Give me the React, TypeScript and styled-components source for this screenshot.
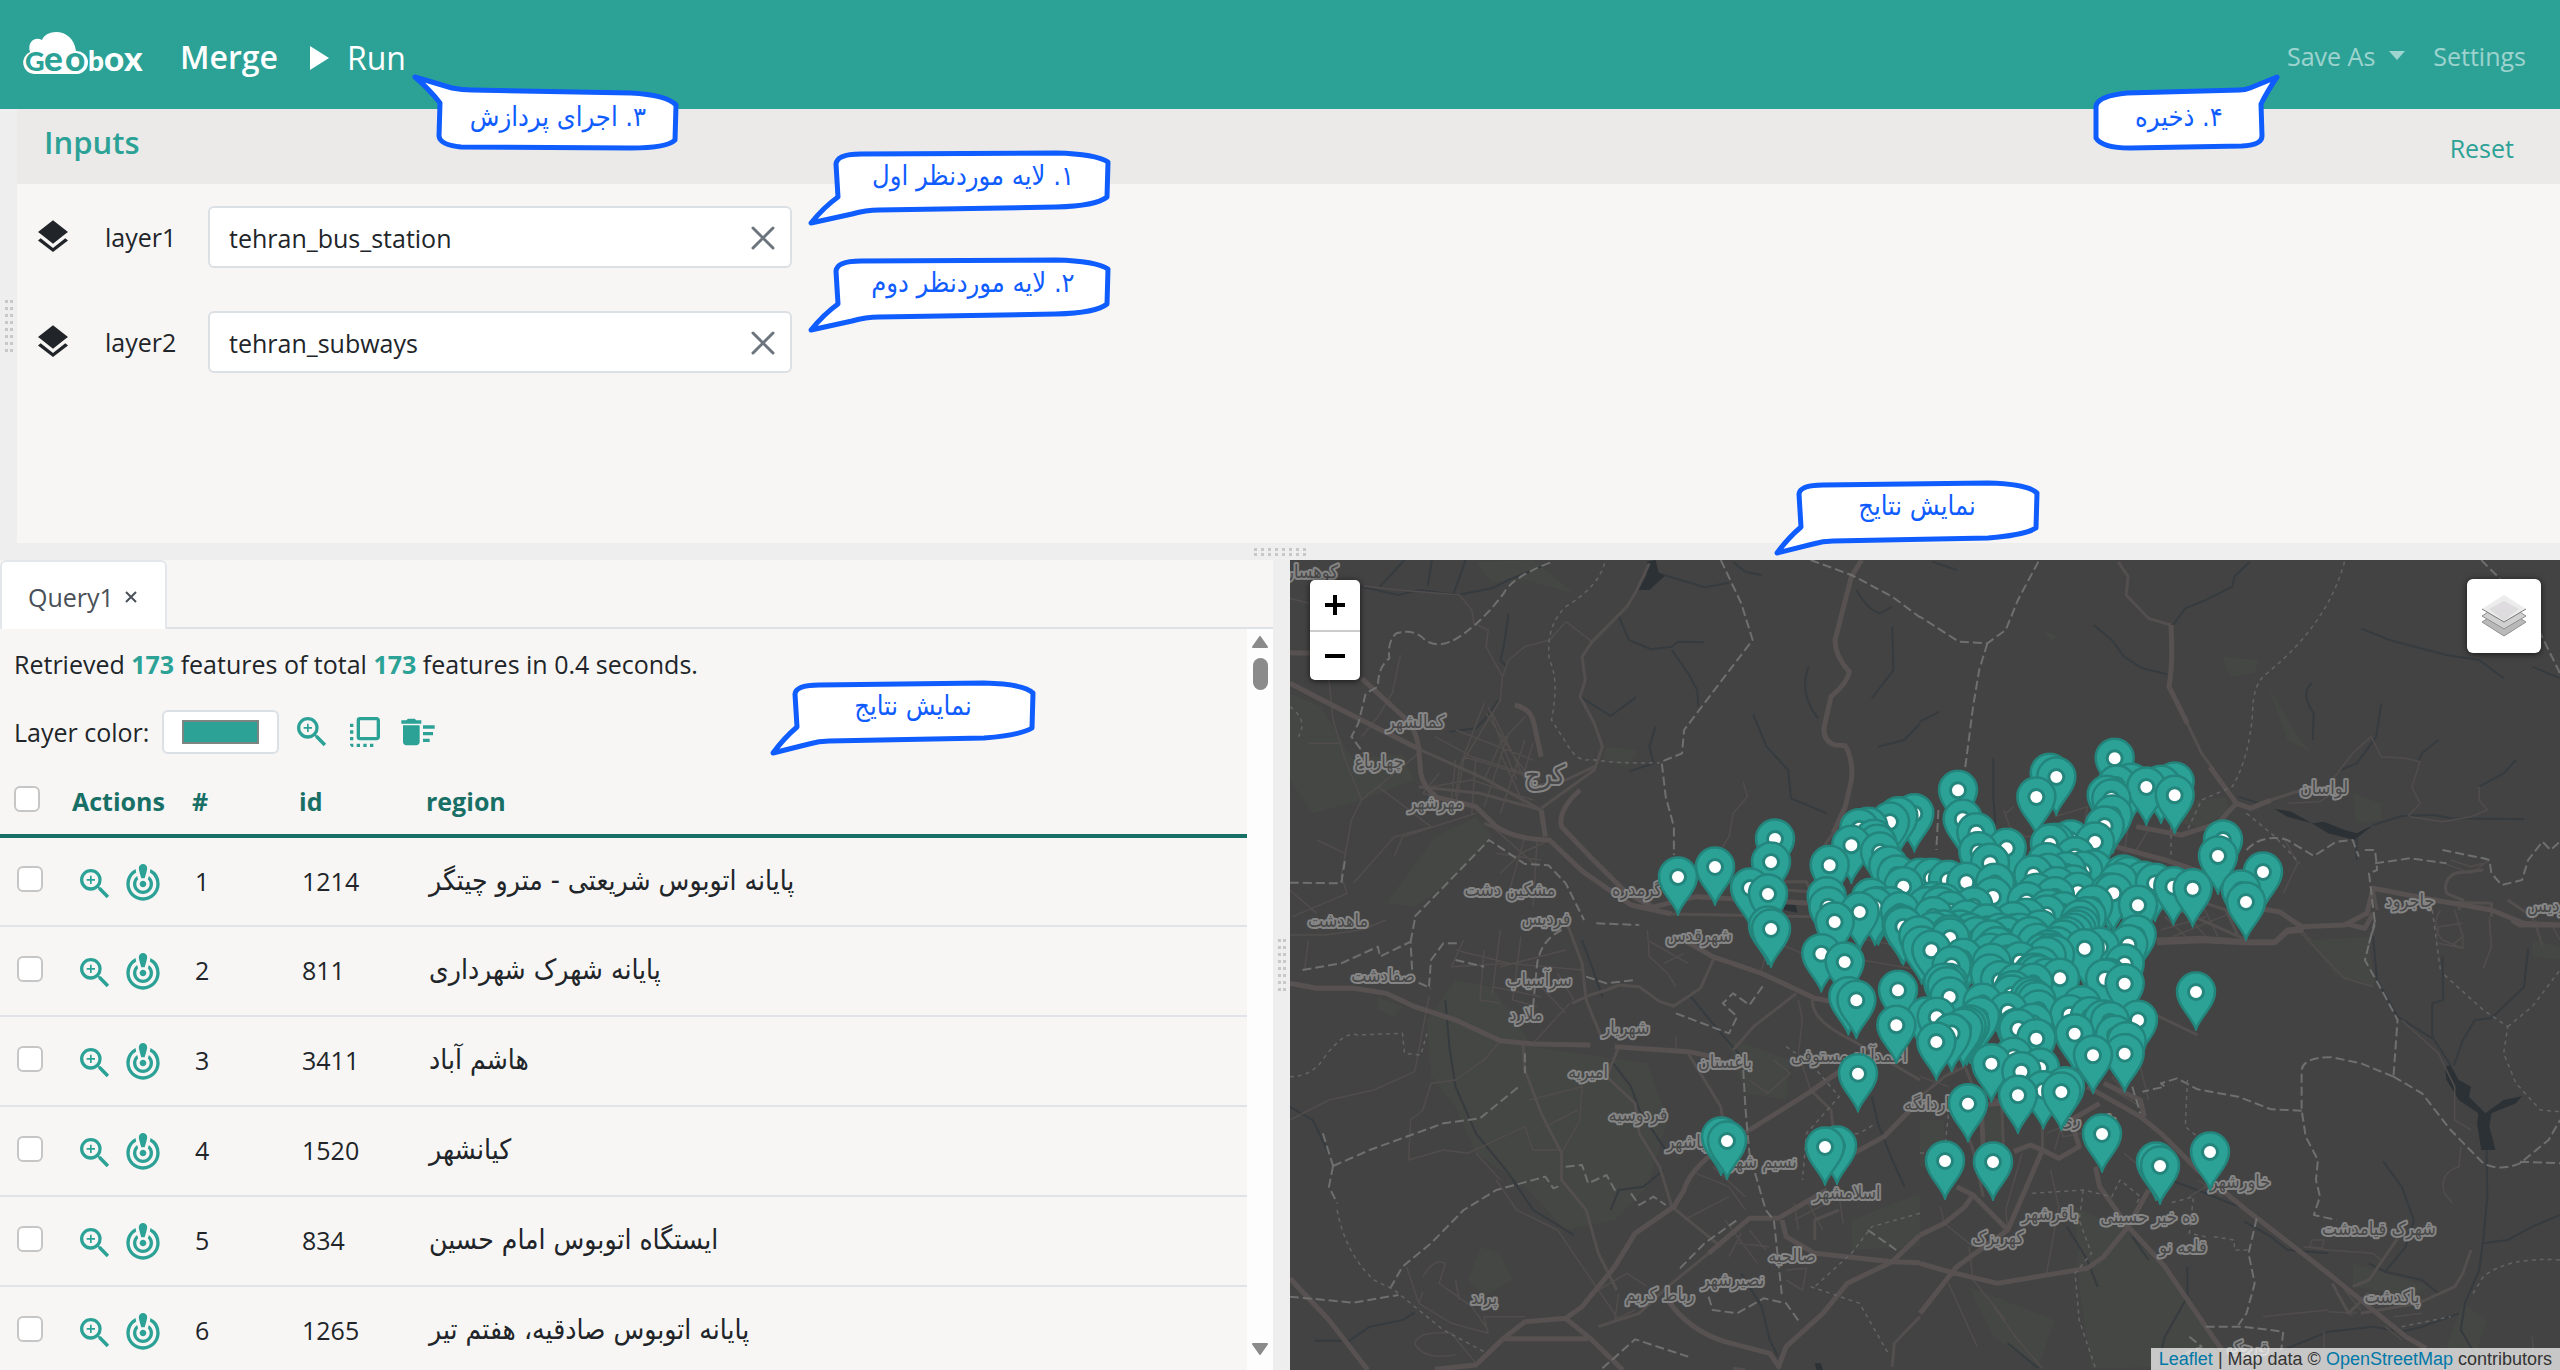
import React from "react";
import styled, { createGlobalStyle } from "styled-components";
import { MdZoomIn, MdFlipToFront, MdDeleteSweep, MdCrisisAlert, MdLayers } from "react-icons/md";

const teal = "#2ca297";
const deepTeal = "#176f65";
const blue = "#0f5cff";
const sans = `"Open Sans", "DejaVu Sans Condensed", "DejaVu Sans", sans-serif`;
const persian = `"DejaVu Sans Condensed", "DejaVu Sans", sans-serif`;

const Global = createGlobalStyle`
  *, *::before, *::after { box-sizing: border-box; }
  body { margin: 0; font: 25px/36px ${sans}; color: #212529; background: #eeeeee; }
  button, input { font: inherit; color: inherit; }
  button { border: 0; padding: 0; background: none; cursor: pointer; }
`;

const Page = styled.div`
  position: relative;
  display: flex;
  flex-direction: column;
  height: 100vh;
  overflow: hidden;
`;

const Header = styled.header`
  display: flex;
  align-items: center;
  flex: 0 0 109px;
  padding: 6px 34px 0 22px;
  background: ${teal};
  color: #fff;
`;
const Logo = styled.svg`
  width: 124px;
  height: 44px;
  margin: 0 34px 7px 0;
`;
const Title = styled.h1`
  margin: 0 32px 2px 0;
  font-size: 32px;
  line-height: 48px;
  font-weight: 600;
`;
const RunButton = styled.button`
  display: flex;
  align-items: center;
  gap: 18px;
  font-size: 32px;
  line-height: 48px;
`;
const HeaderNav = styled.nav`
  display: flex;
  align-items: center;
  gap: 28px;
  margin: 0 0 4px auto;
  color: rgba(255, 255, 255, 0.55);
`;
const NavButton = styled.button`
  display: flex;
  align-items: center;
  gap: 14px;
  color: inherit;
`;

const Upper = styled.div`
  display: flex;
  flex: 0 0 434px;
`;
const SideGutter = styled.div`
  display: flex;
  align-items: center;
  justify-content: center;
  width: 17px;
`;
const InputsPanel = styled.section`
  flex: 1;
  background: #f7f6f4;
`;
const PanelHead = styled.div`
  display: flex;
  justify-content: space-between;
  align-items: center;
  height: 75px;
  padding: 2px 46px 0 27px;
  background: #ebeae8;
  color: ${teal};
`;
const PanelTitle = styled.h2`
  margin: 0;
  padding-bottom: 12px;
  font-size: 31px;
  line-height: 42px;
  font-weight: 600;
`;
const Fields = styled.div`
  display: flex;
  flex-direction: column;
  gap: 43px;
  padding: 22px 16px;
`;
const Field = styled.div`
  display: grid;
  grid-template-columns: 72px 103px 584px;
  align-items: center;
`;
const InputBox = styled.div`
  display: flex;
  align-items: center;
  height: 62px;
  padding: 2px 14px 0 19px;
  border: 2px solid #dbe0e5;
  border-radius: 6px;
  background: #fff;
`;
const TextInput = styled.input`
  flex: 1;
  min-width: 0;
  border: 0;
  padding: 0;
  outline: 0;
  background: none;
`;
const IconButton = styled.button`
  display: inline-flex;
  color: ${teal};
`;

const RowGutter = styled.div`
  display: flex;
  align-items: center;
  justify-content: center;
  flex: 0 0 17px;
`;
const Lower = styled.div`
  display: grid;
  grid-template-columns: minmax(0, 1273fr) 17px minmax(0, 1270fr);
  flex: 1;
  min-height: 0;
`;
const Results = styled.section`
  display: flex;
  flex-direction: column;
  min-height: 0;
  background: #f7f6f4;
`;
const Tabs = styled.div`
  display: flex;
  height: 69px;
  border-bottom: 2px solid #dee2e6;
`;
const Tab = styled.div`
  display: flex;
  align-items: center;
  gap: 11px;
  height: 69px;
  padding: 2px 28px 0 26px;
  border: 2px solid #e3e6ea;
  border-bottom: 0;
  border-radius: 6px 6px 0 0;
  background: #fff;
  color: #495057;
`;
const ResultBody = styled.div`
  display: flex;
  flex: 1;
  min-height: 0;
`;
const ResultContent = styled.div`
  flex: 1;
  overflow: hidden;
`;
const Summary = styled.p`
  margin: 0;
  padding: 17px 14px 0;
  b { color: ${teal}; }
`;
const LayerBar = styled.div`
  display: flex;
  align-items: center;
  gap: 13px;
  padding: 28px 14px 0;
`;
const ColorInput = styled.input`
  width: 117px;
  height: 44px;
  padding: 8px 18px;
  border: 2px solid #dbe0e5;
  border-radius: 6px;
  background: #fff;
  &::-webkit-color-swatch-wrapper { padding: 0; }
  &::-webkit-color-swatch { border: 2px solid #7d8583; border-radius: 0; }
`;
const Table = styled.table`
  width: 100%;
  margin-top: 16px;
  border-collapse: collapse;
  table-layout: fixed;
  text-align: left;
`;
const HeadCell = styled.th<{ $w?: number }>`
  width: ${(p) => (p.$w ? p.$w + "px" : "auto")};
  height: 66px;
  padding: 0 0 3px 14px;
  border-bottom: 4px solid ${deepTeal};
  color: ${deepTeal};
  font-weight: 700;
`;
const Cell = styled.td`
  height: 90px;
  padding: 0 0 2px 17px;
  border-bottom: 2px solid #e0e3e8;
`;
const RegionCell = styled(Cell)`
  font-family: ${persian};
  font-size: 28px;
`;
const Check = styled.input`
  display: block;
  appearance: none;
  width: 26px;
  height: 26px;
  margin: 0 0 3px;
  border: 2px solid #c6c6c6;
  border-radius: 6px;
  background: #fff;
`;
const Actions = styled.div`
  display: flex;
  gap: 8px;
  padding-top: 6px;
`;
const Scroll = styled.div`
  display: flex;
  flex-direction: column;
  align-items: center;
  width: 26px;
  padding: 7px 0 15px;
  background: #fdfdfd;
`;
const Thumb = styled.div`
  flex: 0 0 32px;
  width: 15px;
  margin: 10px 0 auto;
  border-radius: 8px;
  background: #8b8b8b;
`;

const MapPane = styled.section`
  position: relative;
  overflow: hidden;
  background: #434343;
`;
const MapCanvas = styled.svg`
  display: block;
  width: 100%;
  height: 100%;
`;
const ZoomControl = styled.div`
  position: absolute;
  top: 20px;
  left: 20px;
  border-radius: 5px;
  background: #fff;
  box-shadow: 0 1px 6px rgba(0, 0, 0, 0.65);
`;
const ZoomButton = styled.button`
  display: flex;
  align-items: center;
  justify-content: center;
  width: 50px;
  height: 50px;
  color: #000;
  & + & { border-top: 2px solid #ccc; }
`;
const LayersControl = styled.button`
  position: absolute;
  top: 19px;
  right: 19px;
  display: flex;
  align-items: center;
  justify-content: center;
  width: 74px;
  height: 74px;
  border-radius: 6px;
  background: #fff;
  box-shadow: 0 1px 6px rgba(0, 0, 0, 0.65);
`;
const Attribution = styled.div`
  position: absolute;
  right: 0;
  bottom: 0;
  padding: 0 8px;
  background: rgba(255, 255, 255, 0.7);
  color: #333;
  font: 18px/22px "Liberation Sans", Arial, sans-serif;
  a { color: #0078a8; text-decoration: none; }
`;

const Callout = styled.div<{ $top: number; $left?: string; $right?: string }>`
  position: absolute;
  top: ${(p) => p.$top}px;
  left: ${(p) => p.$left ?? "auto"};
  right: ${(p) => p.$right ?? "auto"};
  display: grid;
  align-items: start;
  justify-items: center;
  color: ${blue};
  font-family: ${persian};
  font-size: 27px;
  > * { grid-area: 1 / 1; }
`;
const CalloutText = styled.span<{ $pad: string }>`
  padding: ${(p) => p.$pad};
  white-space: nowrap;
`;

const bubbles = {
  wide: { w: 306, h: 78, pad: "8px 0 0 28px", d: "M5 73Q18 57 32 47L30 14Q31 4 55 4L250 3Q290 4 302 12L301 47Q290 56 250 57L73 60Q60 60 46 64Z" },
  short: { w: 268, h: 78, pad: "8px 0 0 20px", d: "M4 73Q15 58 28 47L26 14Q27 5 50 5L215 3Q255 4 264 13L263 48Q252 55 215 58L60 61Q50 61 40 64Z" },
  run: { w: 268, h: 80, pad: "27px 0 0 24px", d: "M3 5L40 16Q50 18 60 18L219 21Q255 23 264 33L263 68Q255 76 219 76L49 75Q28 73 27 64L28 31Q18 18 3 5Z" },
  save: { w: 190, h: 80, pad: "27px 12px 0 0", d: "M187 5L160 16Q155 18 150 18L37 21Q8 24 6 34L6 66Q12 76 40 76L152 74Q172 73 172 64L171 32Q177 20 187 5Z" },
};

function Bubble({ kind, top, left, right, children }: { kind: keyof typeof bubbles; top: number; left?: string; right?: string; children: React.ReactNode }) {
  const b = bubbles[kind];
  return (
    <Callout $top={top} $left={left} $right={right} dir="ltr">
      <svg width={b.w} height={b.h} viewBox={`0 0 ${b.w} ${b.h}`} overflow="visible" aria-hidden="true">
        <path d={b.d} fill="#fff" stroke={blue} strokeWidth="5" strokeLinejoin="round" />
      </svg>
      <CalloutText dir="rtl" $pad={b.pad}>{children}</CalloutText>
    </Callout>
  );
}

function Grip({ cols, rows }: { cols: number; rows: number }) {
  const dots = [];
  for (let r = 0; r < rows; r++)
    for (let c = 0; c < cols; c++)
      dots.push(<rect key={`${r}-${c}`} x={c * (rows > cols ? 5 : 7)} y={r * (rows > cols ? 7 : 5)} width="3" height="3" fill="#c8c8c8" />);
  return <svg width={rows > cols ? 8 : 52} height={rows > cols ? 52 : 8} aria-hidden="true">{dots}</svg>;
}

const rows: [number, number, string][] = [
  [1, 1214, "پایانه اتوبوس شریعتی - مترو چیتگر"],
  [2, 811, "پایانه شهرک شهرداری"],
  [3, 3411, "هاشم آباد"],
  [4, 1520, "کیانشهر"],
  [5, 834, "ایستگاه اتوبوس امام حسین"],
  [6, 1265, "پایانه اتوبوس صادقیه، هفتم تیر"],
];

/* City centre stations, in thirds of a map pixel from (1800, 720). */
const cityStations = `474,211 769,171 749,160 709,231 944,115 1039,201 1124,226 1124,186 1083,196 950,195 993,190 920,226 934,237 938,285 914,318 885,366
343,281 295,290 270,306 205,322 178,326 154,376 89,436 222,358 232,373 240,396 265,438 290,465 488,298 529,338 535,395 570,430 620,385 310,500
360,475 395,475 444,481 499,487 585,490 579,531 80,530 85,560 104,606 213,535 235,560 225,562 179,576 64,701 134,726 145,830 169,841 294,811 289,916
379,891 410,892 409,966 455,940 500,920 510,915 490,925 540,890 174,1061 504,1151 574,1031 640,1012 664,1055 720,1044 654,1126 730,1112 784,1116 795,1100
879,1006 974,1001 824,941 809,884 1014,901 709,956 655,927 624,875 974,791 915,777 925,775 974,732 985,674 1010,645 854,686 900,682 1014,556
1178,506 1120,500 1065,490 1030,484 880,555 928,519 850,454 834,517 745,568 449,831 394,691 450,654 305,615 765,370 812,360 750,372 740,428 825,410
700,465 745,460 800,455 880,450 970,465 985,470 955,488 940,520 680,545 710,520 770,500 820,495 765,530 400,545 430,550 400,590 450,574 300,575
270,560 310,620 355,648 365,678 490,715 455,738 445,790 440,800 430,790 548,850 575,730 570,762 600,782 570,700 570,660 620,650 660,640 640,605 680,595
720,630 740,585 790,575 840,600 830,630 800,650 770,680 740,710 720,740 700,760 650,790 700,790 740,775 780,775 635,825 640,812 690,830 700,838 710,845 715,870
845,857 870,890 910,900 930,905 945,946 980,965 650,925 700,910 380,560 420,560 510,640 560,612 450,645 400,635 620,700 660,725 530,650 590,680
730,700 745,690 755,700 765,705 715,765 705,760 600,640 500,600 480,630 430,630 840,620 820,640 790,660 860,590 520,560 690,650 710,670`;
const outerStations = `1678,877 1715,867 1775,839 1771,862 1750,888 1768,894 1768,926 1771,929 1721,1137 1727,1141 1837,1146 1825,1147 2196,992 1945,1161 1993,1162 2102,1134 2156,1162 2160,1166 2210,1152 2223,840 2218,856 2263,872 2241,890 2246,902`;
const parse = (s: string) => s.trim().split(/\s+/).map((p) => p.split(",").map(Number));
const stations = [
  ...parse(cityStations).map(([x, y]) => [1800 + x / 3, 720 + y / 3]),
  ...parse(outerStations),
].sort((a, b) => a[1] - b[1]);

const places: [number, number, string, number?][] = [
  [1312, 578, "کوهسار"], [1416, 728, "کمالشهر"], [1379, 768, "چهارباغ"], [1545, 784, "کرج", 27], [1436, 809, "مهرشهر"],
  [1510, 896, "مشکین دشت"], [1637, 896, "گرمدره"], [1338, 927, "ماهدشت"], [1546, 925, "فردیس"], [1699, 942, "شهرقدس"],
  [1383, 982, "صفادشت"], [1539, 986, "سرآسیاب"], [1526, 1021, "ملارد"], [1626, 1034, "شهریار"], [1725, 1068, "باغستان"],
  [1849, 1062, "احمدآباد مستوفی"], [1588, 1078, "امیریه"], [1638, 1121, "فردوسیه"], [1690, 1148, "رباشهر"], [1762, 1168, "نسیم شهر"],
  [1847, 1199, "اسلامشهر"], [1792, 1262, "صالحیه"], [1733, 1286, "نصیرشهر"], [1660, 1301, "رباط کریم"], [1484, 1304, "پرند"],
  [1936, 1110, "چهاردانگه"], [2088, 1126, "شهر ری"], [2050, 1220, "باقرشهر"], [1998, 1244, "کهریزک"], [2149, 1223, "ده خیر حسینی"],
  [2183, 1253, "قلعه نو"], [2240, 1188, "خاورشهر"], [2379, 1235, "شهرک قیامدشت"], [2392, 1303, "پاکدشت"], [2248, 1354, "قرچک"],
  [2324, 794, "لواسان"], [2410, 907, "جاجرود"], [2550, 912, "پردیس"],
];

type Tile = { at: [number, number]; green: string; water: string; river: string; border: string; dots: string; big: string; mid: string; small: string };
const tiles: Tile[] = [
  {
    at: [1280, 460],
    green: "M480 305L620 300L720 400L600 360L520 370ZM24 700L100 740L180 900L300 880L330 960L200 1020L80 1060L24 960ZM800 860L880 870L850 920L790 900ZM380 1130L480 1070L520 1130L400 1280L330 1340L260 1330Z",
    water: "M900 305L920 300L928 338L945 345L905 390L878 390L898 345ZM1235 1320L1262 1325L1268 1358L1235 1350Z",
    river: "M200 380L290 405L340 390L435 405L520 385L560 360L660 310M305 300L245 380M372 300L362 378M455 300L425 402M830 470L855 540L910 568L960 560L975 545L1040 547M960 570L1000 640L1022 690L1025 740M735 710L810 768L872 712M1160 765L1192 860L1245 930L1252 1015L1340 1060M940 345L1040 382L1100 368M1295 620Q1270 700 1318 775M1500 500L1503 630L1450 715M560 460L548 560L540 600L555 620M535 720L500 780L480 805L415 815M920 800L905 860L915 910L855 935M1412 390Q1440 450 1470 460L1500 440M1465 860L1530 840L1568 790M1110 305L1140 335L1180 345",
    border: "M662 308Q570 350 548 400Q500 480 440 530Q390 570 355 540Q330 505 285 520Q262 545 268 595Q240 620 240 680L210 700L192 790L175 830L205 880M1080 300L1130 430L1158 540L1080 665L990 810L985 880L935 905L945 1010L965 1100L965 1185M1300 300L1400 345L1500 410L1568 472M24 1268L150 1270L160 1195M330 1370L400 1282L512 1140L600 1212L658 1216L700 1270L745 1380",
    dots: "M795 310Q780 380 700 440Q650 500 660 600Q685 660 665 780L702 850Q730 910 760 898Q830 912 930 908M24 740Q70 780 45 830",
    big: "M24 670L180 768L345 870M200 655L295 762Q335 800 340 870L345 940Q350 980 385 1012L480 1040L530 1100Q575 1138 660 1140L742 1235L860 1335L960 1362M622 790L640 890M575 735Q615 745 622 790M640 1050L650 1130M24 578L80 580M735 990Q680 1050 690 1100L760 1190L850 1300L920 1345M1425 300L1400 350L1360 540Q1360 590 1395 635Q1390 670 1350 710L1335 790Q1325 840 1360 855L1385 857Q1405 900 1400 960L1385 1040L1355 1120M900 1345L1020 1310L1300 1330",
    mid: "M345 870L500 955L640 1050M905 310L870 400L850 440L765 545L740 590L748 660L735 710L770 790L790 860L770 930L640 1045M340 980L490 1000L640 1050M770 920L700 960L620 980M1100 1265L1290 1265L1300 1295L1180 1285M960 1362L1300 1370M500 1090L580 1130M1355 1120L1320 1180",
    small: "M205 378L290 390L440 405L470 450L475 490L510 510L505 560L545 650L540 720L520 760M700 485L660 540L600 560L560 600L545 650M700 485L765 545M295 585L275 700L240 770L200 830M120 660L130 780L160 900L200 1020L175 1080L150 1250L165 1300L30 1370M200 1020L290 930L340 880M200 1020L240 980L370 1100L280 1130L180 1270M24 1290L90 1360M500 730L440 920L430 1010M520 760L450 900L430 1040M560 820L500 1040M600 840L540 1060M505 760L580 900L640 1000M430 810L620 900M380 830L470 890L600 940M370 980L470 960L620 1020M430 900L420 1020M480 890L470 1060M540 880L600 1040M520 760L570 880L600 960M600 770L540 850L500 960M620 850L600 930M510 740L540 840L580 960M450 890L640 960M390 940L350 1000L430 1030M520 1100L630 1220M600 1130L560 1300M630 1140L620 1340M530 1180L640 1200M660 1140L590 1180L540 1240M480 1060L300 1130L280 1190M90 1140L160 1180M70 850L150 850M1135 965L1145 1010L1110 1060L1100 1130L1080 1170M24 415L70 430",
  },
  {
    at: [1920, 540],
    green: "M740 350L830 360L820 400L760 410ZM850 430L920 580L960 640L900 600ZM300 270L340 290L320 300ZM670 780L750 770L760 820L680 860L640 850ZM1060 760L1130 790L1130 840L1070 850ZM960 1200L1100 1190L1100 1290L1000 1280Z",
    water: "M868 806L910 815L960 850L990 845L1040 870L1070 880L1110 855L1065 900L1000 880L960 850L900 830Z",
    river: "M808 65L770 110L765 140L700 180L650 205L620 255M425 255L470 300L500 350L545 385L605 403M1080 265L1150 300L1290 345L1370 360L1430 415M1130 490L1118 590L1070 670L1030 690M960 430Q930 460 965 520L962 600M1270 600L1230 640L1220 665M1110 855L1180 828L1260 825L1300 835L1480 838M180 655L180 780L185 850M1460 660L1430 700L1370 740M1070 890L1070 960M780 770L830 790M1500 380L1568 415M30 65L90 90M0 545L48 515",
    border: "M290 65L240 180L210 270L165 310L95 305L0 230M165 310L145 390L130 500L110 690M1375 60L1420 115L1500 230L1568 400M800 930Q840 880 900 900L965 948L1020 905L1060 900L1075 950M1115 970L1200 955L1290 970M1280 930L1380 955L1395 960L1400 1000L1425 1035L1475 1020L1490 960L1525 905L1545 930L1568 905M1090 930L1115 930L1120 990L1100 1000L1115 1150L1090 1250M45 810L40 930",
    dots: "M1040 65Q1000 250 850 400Q815 430 815 520Q805 660 765 740L690 780L655 870M615 860L615 950M800 820L870 890L930 970M1255 1110L1275 1290",
    big: "M615 255Q620 380 610 440L655 550M710 680L775 790L810 805L860 780M775 790L730 850L640 885L530 860M480 920L600 960L700 1000L800 1100L880 1115L935 1160L1040 1155L1095 1120L1110 1045L1260 1080L1400 1110L1480 1150L1568 1155M580 1200L690 1195L800 1205L870 1205L900 1170L940 1165M1110 1120L1090 1165L1040 1150",
    mid: "M485 65L510 110L505 165L560 235L615 255M655 550L690 640L720 690M860 780L935 750M1110 1045L1120 1110M1260 1085L1400 1090L1400 1130M700 1090L750 1110L780 1190M560 1070L800 1200M1380 990L1310 1000Q1280 1020 1290 1060L1330 1080L1320 1110M1440 1080L1500 1130",
    small: "M1010 720L1060 640L1105 590L1130 650L1190 655L1225 665L1205 740L1225 790L1195 830M1370 740L1370 780L1390 810L1350 830L1280 845L1200 830M900 790L980 785L1010 760M205 810L220 860L260 890L400 880L410 800L330 830M230 800L210 820M600 1130L660 1200M640 1100L700 1190M690 1090L730 1190M590 1170L700 1130M620 1190L760 1120M510 860L500 940M560 870L530 930M890 890L925 970L890 1060M930 1165L1020 1285M1275 1110Q1250 1160 1280 1200L1330 1225M1310 1110L1330 1190L1300 1220M1395 1130L1400 1220L1380 1285M1500 1130L1525 1220M1550 1160L1568 1200M1285 970L1350 1000L1395 960M1300 960L1350 980L1380 970",
  },
  {
    at: [1280, 920],
    green: "M360 300L430 180L520 200L620 380L900 430L950 600L900 800L820 900L700 930L600 800L480 700L430 560L370 470ZM490 980L540 1000L570 1080L500 1130L460 1080ZM1090 350L1250 420L1240 540L1140 520ZM1400 900L1568 820L1568 980L1400 990ZM240 230L300 260L280 290L240 270Z",
    water: "M1310 1330L1325 1330L1330 1350L1315 1350Z",
    river: "M405 240L415 380L430 500L480 640L560 760L620 870L720 945M810 420L860 500L880 570L950 700M1000 220L1060 310L1130 410M740 60L770 160L790 230M85 1262L170 1262L220 1220L300 1200L330 1178M1130 1060L1180 1160L1200 1260L1220 1310M1450 530L1465 610L1500 720L1530 800M940 750L890 800L830 810L810 870M24 560L80 600L120 700",
    border: "M55 150L150 130L240 80L245 110L320 65L325 180L370 205M330 0L320 65M365 200L370 120L400 70L440 70M430 120L500 140M690 30Q640 60 630 130L620 260M130 738L220 690L400 610L490 595L590 495M130 738L120 800L140 850M105 640L130 738M270 1105L300 1040L370 970L450 870L530 810L650 770L670 805L690 795M700 740L740 735L755 790L800 765L825 820M860 820L880 855L915 830L945 855M24 1130L180 1148L290 1125M600 400L600 460M970 280L1100 340L1120 290L1085 250L1110 220L1150 255L1185 195M750 170L800 190L870 180M775 10L880 15M1135 450L1140 560L1150 700L1190 870L1210 900L1230 1130M1050 1130L1060 1170L1120 1180L1185 1135L1240 1150L1275 1210M790 1345L870 1258L1000 1310M980 1045L1040 970L1120 900M1440 930L1510 990",
    dots: "M24 470Q80 470 110 410Q160 330 190 345L300 340L305 400L345 405L360 340M140 870Q160 1000 230 1080L280 1110L400 1230L500 1295M1240 380L1300 430L1370 530L1290 640L1280 780M1300 1100L1420 1150L1490 1300M1568 880L1450 920L1400 1000L1310 1100M1330 650L1420 640L1460 610",
    big: "M24 190L90 205L180 205L260 220L330 260L430 300L540 362L620 372L760 375M820 380L1000 395L1060 410M1370 455L1300 515L1150 630L1060 700Q1000 760 990 810L965 860L870 940L820 1040L740 1160L700 1195L600 1205L545 1258L480 1335L380 1348M24 1075L120 1200L215 1350M700 1195L760 1255L840 1350M545 1256L755 1256M950 1140Q1000 1230 1090 1265L1200 1300L1225 1345M1568 945L1500 1025L1390 1090L1330 1180L1240 1280L1220 1345M1310 1000L1500 1025L1568 1028M1050 1000L1150 895L1220 895L1340 810M990 60L1060 110L1180 160L1310 235L1420 260M1230 900L1240 950L1310 1000M1405 700L1480 650L1568 540",
    mid: "M715 250L760 225L800 210L830 195L880 200L930 245L965 258L1030 205L1065 110M1110 390L1160 320L1265 220M595 370L600 450L640 580L690 700L690 780L750 870L780 1000L825 1110M1305 240Q1300 300 1400 360L1568 480M700 0L740 130L750 240L790 360M830 380L800 470L870 550L880 640L930 740L960 860L1080 980M1050 1000L950 1100L880 1180L780 1220M1300 510L1350 570L1355 620M1000 400L1080 560L1085 600M1110 1345L1140 1350M1500 1340L1505 1270L1568 1190M1310 960L1310 900L1370 870",
    small: "M24 45L110 45L200 30L260 0M70 60L60 150M430 90L560 130L740 150M450 60L420 140L560 130M500 90L490 240L540 250M540 30L520 220M590 50L570 240L630 260M540 140L700 90M520 200L640 230M640 200L700 280M680 160L720 240M900 30L905 110L950 160L970 200M900 60L1000 130M940 130L990 100M1270 240L1280 300L1270 400L1300 510M1150 480L1195 520L1250 460L1210 420M970 350L970 390M620 370L710 250M540 362L500 420L430 480L370 490L350 570L320 600L315 720L400 690L460 700L600 620L620 690L690 690M24 600L120 540L230 510L330 455M365 230L330 455M610 540L740 500L735 600L690 700M650 620L730 570M310 1040L340 1150L420 1210L510 1240L500 1190L600 1190M350 1070Q380 1010 405 1030L390 1090L470 1160L510 1230M350 1115L340 1150M430 1080L440 1140M330 1270Q340 1230 420 1240L480 1330M330 1270Q350 1320 430 1305M530 780L580 870L680 930L730 1020L780 1110L830 1200M780 1110L850 1060L900 1100M830 1120L820 1200L870 1170M1020 760L1100 800L1140 870M1060 740L1140 830M990 900L1100 830M1090 900L1170 1030M1130 940L1100 1010M1150 930L1190 990M1120 970L1200 980M1260 850L1270 930M1290 840L1330 930M1260 900L1370 830M1370 830L1380 910M1240 1050L1290 1045L1280 1110L1240 1080M480 700L540 780M1160 0L1200 60L1300 110M1200 60L1180 150M1400 50L1568 90M1330 100L1568 150M1360 50L1370 240",
  },
  {
    at: [1920, 920],
    green: "M380 860L500 930L600 1050L700 1200L740 1340L420 1345L390 1100ZM120 1100L330 1200L290 1345L180 1250ZM950 60L1100 70L1115 200L1020 170ZM1060 1030L1250 1100L1200 1130L1060 1100ZM1330 1150L1390 1200L1350 1340L1290 1280ZM0 600L60 600L60 760L0 740ZM150 560L210 560L200 670L150 660ZM1500 60L1568 80L1568 120L1500 110Z",
    water: "M1286 440L1300 436L1320 480L1350 500L1345 530L1385 580L1430 540L1475 528L1460 550L1400 580L1395 620L1410 690L1375 690L1365 610L1368 580L1320 540L1290 480Z",
    river: "M1280 110L1282 240L1255 250L1255 350L1300 436M1490 85L1480 200L1400 295L1360 300L1330 360L1308 436M1110 50L1120 180L1170 290L1255 355M1388 690L1390 830L1380 960L1370 1050L1335 1150L1325 1230L1380 1345M1380 970L1440 960L1500 920L1568 885M1135 725L1180 800L1210 900L1190 980L1140 1055M795 905L860 950L900 990L1000 1000M890 1290L1000 1235L1110 1220L1180 1235L1230 1220L1320 1180M1100 1030L1140 1055L1230 1080L1270 1120M655 1040L655 1130L600 1250L590 1300M360 920L410 1020L435 1100M590 770L680 810L760 850L810 870M215 1270L290 1345M520 950L560 1020",
    border: "M1115 0L1090 120L1140 230L1170 300L1160 470M1160 470L1080 430L1010 412Q940 410 935 450L935 570L945 650L975 720L970 780L980 830L965 885L1020 900M935 572L860 568L780 530L680 508L630 475L590 490L600 500L545 515M1160 470L1230 520L1300 630L1380 730Q1420 755 1470 730L1540 660L1568 600M1470 725L1568 730M825 895L805 1000L820 1090L800 1180L780 1215M700 1220L790 1220L890 1235L885 1290M660 1250L690 1280L650 1300M520 500L540 580",
    dots: "M1285 165L1380 270L1440 320L1430 400L1460 490L1520 570L1568 575M1440 320L1500 260L1568 150M1568 1020Q1440 1010 1380 1070L1350 1130M655 480L650 620L690 660M275 820L400 810L470 830L490 780L540 830L530 850M400 810L390 900L420 1000L380 1060L390 1200L430 1345M720 950L770 960L770 990L810 990M0 700L60 690L70 580M700 950L660 940L670 830L610 850M1180 1220L1300 1190",
    big: "M410 500L540 590L590 640L680 750L800 870L1000 1060L1190 1250L1240 1285M90 800L130 825L215 930L300 690L270 675L230 695M0 1180L90 1040L215 930M560 810L510 920L450 1010L410 1045L190 1090L70 1055L0 1030M430 740L440 800L510 920L600 1040L700 1220L740 1290M300 690L340 715L390 680L370 600L440 550M450 490L540 540L550 590M130 825L110 860L60 910L0 945M580 68L690 62L800 68L870 68L900 35L940 30M1450 0L1470 15L1568 15M200 550L150 555L155 690",
    mid: "M0 530L60 470L110 440L130 500L200 550L205 690M300 600L300 690M570 280L680 345M1170 955L1100 1080L1060 1100M1350 990L1330 1060L1310 1100L1220 1150L1080 1180M150 560L110 620L130 690L155 830M1010 1090L1050 1180L1100 1120",
    small: "M930 35L1040 175L1110 200M1265 60L1270 20L1330 10M1270 70L1330 85L1330 40M1395 0L1400 80L1380 145M1508 0L1525 80M320 500L350 650L400 640M310 640L390 600M330 690L360 560M470 470L520 540M460 500L540 560M500 700L560 760M940 980L1000 990L1110 1000L1130 1020M960 960L990 960L985 985L955 980ZM1000 1175L1070 1180M1020 1120L1060 1190M1040 1110L1080 1170M1160 1190L1230 1180M1140 1220L1180 1260M1180 300L1270 400L1310 500L1310 600L1350 630M1325 680L1320 740Q1270 760 1285 820L1305 850M50 860L60 910L130 980M70 1090L140 1280M180 1160L240 1260L300 1345M120 980L130 1080L210 1200M0 470L70 500M20 510L90 440M660 830L700 800L720 820M680 780L740 830M500 500L540 440L560 540M320 750L340 860L310 1060M250 700L210 870L215 930M990 1235L990 1290M840 1190L1000 1170M1500 1250L1505 1345",
  },
];

const line = (d: string, stroke: string, width: number, dash?: string) => (
  <path d={d} fill="none" stroke={stroke} strokeWidth={width} strokeDasharray={dash} strokeLinejoin="round" vectorEffect="non-scaling-stroke" />
);

function CityMap() {
  return (
    <MapCanvas viewBox="1290 560 1270 810" preserveAspectRatio="xMidYMid slice" role="img" aria-label="Map">
      <defs>
        <symbol id="pin" viewBox="0 0 42 60" width="42" height="60">
          <path d="M21 58C17 46 2 35 2 20.500A19 19 0 0 1 40 20.500C40 35 25 46 21 58Z" fill="#2ca297" stroke="#23857c" strokeWidth="2.500" />
          <circle cx="21" cy="21" r="7.500" fill="#fff" stroke="#23857c" strokeWidth="3" />
        </symbol>
      </defs>
      {tiles.map((t) => (
        <g key={t.at.join()} transform={`translate(${t.at[0]} ${t.at[1]}) scale(0.40816 0.33333)`}>
          <path d={t.green} fill="#444743" />
          <path d={t.water} fill="#2b3135" />
          {line(t.river, "#363b3f", 2)}
          {line(t.small, "#524d4d", 1.5)}
          {line(t.mid, "#544f4f", 3)}
          {line(t.big, "#575151", 5)}
          {line(t.border, "#6f6f6f", 2, "9 4")}
          {line(t.dots, "#636363", 1.5, "4 4")}
        </g>
      ))}
      {places.map(([x, y, name, size]) => (
        <text key={name} x={x} y={y} fontSize={size ?? 18} fontFamily={persian} textAnchor="middle" fill="#484848" stroke="#858585" strokeWidth="4" strokeLinejoin="round" paintOrder="stroke">
          {name}
        </text>
      ))}
      {stations.map(([x, y], i) => (
        <use key={i} href="#pin" x={x - 21} y={y - 21} />
      ))}
    </MapCanvas>
  );
}

function CloudLogo() {
  return (
    <Logo viewBox="0 0 124 44" overflow="visible" role="img" aria-label="GeoBox">
      <path d="M8 20C5 10 13 4 20 8C25-4 51-4 54 19A11.500 11.500 0 0 1 55 42H12A11.500 11.500 0 0 1 8 20Z" fill="#fff" />
      <g fontFamily="Lato, sans-serif" fontWeight="900" fill={teal}>
        <text x="3" y="39" fontSize="27">G</text>
        <text x="22" y="39" fontSize="35">e</text>
        <text x="43" y="39" fontSize="35">o</text>
      </g>
      <g fontFamily="Lato, sans-serif" fontWeight="900" fill="#fff">
        <text x="66" y="39" fontSize="28">b</text>
        <text x="82" y="39" fontSize="35">o</text>
        <text x="102" y="39" fontSize="35">x</text>
      </g>
    </Logo>
  );
}

function LayerField({ id, value }: { id: string; value: string }) {
  return (
    <Field>
      <MdLayers size={40} aria-hidden="true" />
      <label htmlFor={id}>{id}</label>
      <InputBox>
        <TextInput id={id} defaultValue={value} />
        <IconButton aria-label={`Clear ${id}`}>
          <svg width="26" height="26" viewBox="0 0 26 26"><path d="M3 3L23 23M23 3L3 23" stroke="#6c757d" strokeWidth="3" strokeLinecap="round" /></svg>
        </IconButton>
      </InputBox>
    </Field>
  );
}

export default function App() {
  return (
    <Page>
      <Global />
      <Header>
        <CloudLogo />
        <Title>Merge</Title>
        <RunButton>
          <svg width="19" height="24" viewBox="0 0 19 24" aria-hidden="true"><path d="M0 0L19 12L0 24Z" fill="#fff" /></svg>
          Run
        </RunButton>
        <HeaderNav>
          <NavButton>
            Save As
            <svg width="16" height="9" viewBox="0 0 16 9" aria-hidden="true"><path d="M0 0H16L8 9Z" fill="currentColor" /></svg>
          </NavButton>
          <NavButton>Settings</NavButton>
        </HeaderNav>
      </Header>

      <Upper>
        <SideGutter><Grip cols={2} rows={8} /></SideGutter>
        <InputsPanel>
          <PanelHead>
            <PanelTitle>Inputs</PanelTitle>
            <NavButton>Reset</NavButton>
          </PanelHead>
          <Fields>
            <LayerField id="layer1" value="tehran_bus_station" />
            <LayerField id="layer2" value="tehran_subways" />
          </Fields>
        </InputsPanel>
      </Upper>

      <RowGutter><Grip cols={8} rows={2} /></RowGutter>

      <Lower>
        <Results>
          <Tabs>
            <Tab>Query1 <IconButton aria-label="Close tab"><svg width="12" height="12" viewBox="0 0 12 12"><path d="M1 1L11 11M11 1L1 11" stroke="#495057" strokeWidth="2" /></svg></IconButton></Tab>
          </Tabs>
          <ResultBody>
            <ResultContent>
              <Summary>Retrieved <b>173</b> features of total <b>173</b> features in 0.4 seconds.</Summary>
              <LayerBar>
                <label htmlFor="color">Layer color:</label>
                <ColorInput id="color" type="color" defaultValue={teal} />
                <IconButton aria-label="Zoom to layer"><MdZoomIn size={40} /></IconButton>
                <IconButton aria-label="Bring to front"><MdFlipToFront size={40} /></IconButton>
                <IconButton aria-label="Clear results"><MdDeleteSweep size={40} /></IconButton>
              </LayerBar>
              <Table>
                <thead>
                  <tr>
                    <HeadCell $w={58}><Check type="checkbox" aria-label="Select all" /></HeadCell>
                    <HeadCell $w={120}>Actions</HeadCell>
                    <HeadCell $w={107}>#</HeadCell>
                    <HeadCell $w={127}>id</HeadCell>
                    <HeadCell>region</HeadCell>
                  </tr>
                </thead>
                <tbody>
                  {rows.map(([n, id, region]) => (
                    <tr key={n}>
                      <Cell><Check type="checkbox" aria-label={`Select row ${n}`} /></Cell>
                      <Cell>
                        <Actions>
                          <IconButton aria-label={`Zoom to ${n}`}><MdZoomIn size={40} /></IconButton>
                          <IconButton aria-label={`Highlight ${n}`}><MdCrisisAlert size={40} /></IconButton>
                        </Actions>
                      </Cell>
                      <Cell>{n}</Cell>
                      <Cell>{id}</Cell>
                      <RegionCell>{region}</RegionCell>
                    </tr>
                  ))}
                </tbody>
              </Table>
            </ResultContent>
            <Scroll aria-hidden="true">
              <svg width="16" height="12" viewBox="0 0 16 12"><path d="M8 1L15 11H1Z" fill="#8b8b8b" stroke="#8b8b8b" strokeWidth="2" strokeLinejoin="round" /></svg>
              <Thumb />
              <svg width="16" height="12" viewBox="0 0 16 12"><path d="M8 11L15 1H1Z" fill="#8b8b8b" stroke="#8b8b8b" strokeWidth="2" strokeLinejoin="round" /></svg>
            </Scroll>
          </ResultBody>
        </Results>
        <SideGutter><Grip cols={2} rows={8} /></SideGutter>
        <MapPane>
          <CityMap />
          <ZoomControl>
            <ZoomButton aria-label="Zoom in"><svg width="22" height="22" viewBox="0 0 22 22"><path d="M11 1V21M1 11H21" stroke="#000" strokeWidth="4" /></svg></ZoomButton>
            <ZoomButton aria-label="Zoom out"><svg width="22" height="22" viewBox="0 0 22 22"><path d="M1 11H21" stroke="#000" strokeWidth="4" /></svg></ZoomButton>
          </ZoomControl>
          <LayersControl aria-label="Layers">
            <svg width="44" height="42" viewBox="0 0 44 42">
              <path d="M0 27L22 13L44 27L22 41Z" fill="#b9b9b9" stroke="#8f8f8f" strokeWidth="1" />
              <path d="M0 21L22 7L44 21L22 34Z" fill="#d0d0d0" stroke="#8f8f8f" strokeWidth="1" />
              <path d="M0 14L22 0L44 14L22 27Z" fill="#ececec" />
              <path d="M7 14L22 6L37 14L22 26Z" fill="#dedcde" />
              <path d="M0 14L22 27L44 14" fill="none" stroke="#777" strokeWidth="1" />
            </svg>
          </LayersControl>
          <Attribution>
            <a href="#leaflet">Leaflet</a> | Map data © <a href="#osm">OpenStreetMap</a> contributors
          </Attribution>
        </MapPane>
      </Lower>

      <Bubble kind="run" top={72} left="412px">۳. اجرای پردازش</Bubble>
      <Bubble kind="save" top={72} right="280px">۴. ذخیره</Bubble>
      <Bubble kind="wide" top={150} left="806px">۱. لایه موردنظر اول</Bubble>
      <Bubble kind="wide" top={257} left="806px">۲. لایه موردنظر دوم</Bubble>
      <Bubble kind="short" top={480} left="1773px">نمایش نتایج</Bubble>
      <Bubble kind="short" top={680} left="769px">نمایش نتایج</Bubble>
    </Page>
  );
}
